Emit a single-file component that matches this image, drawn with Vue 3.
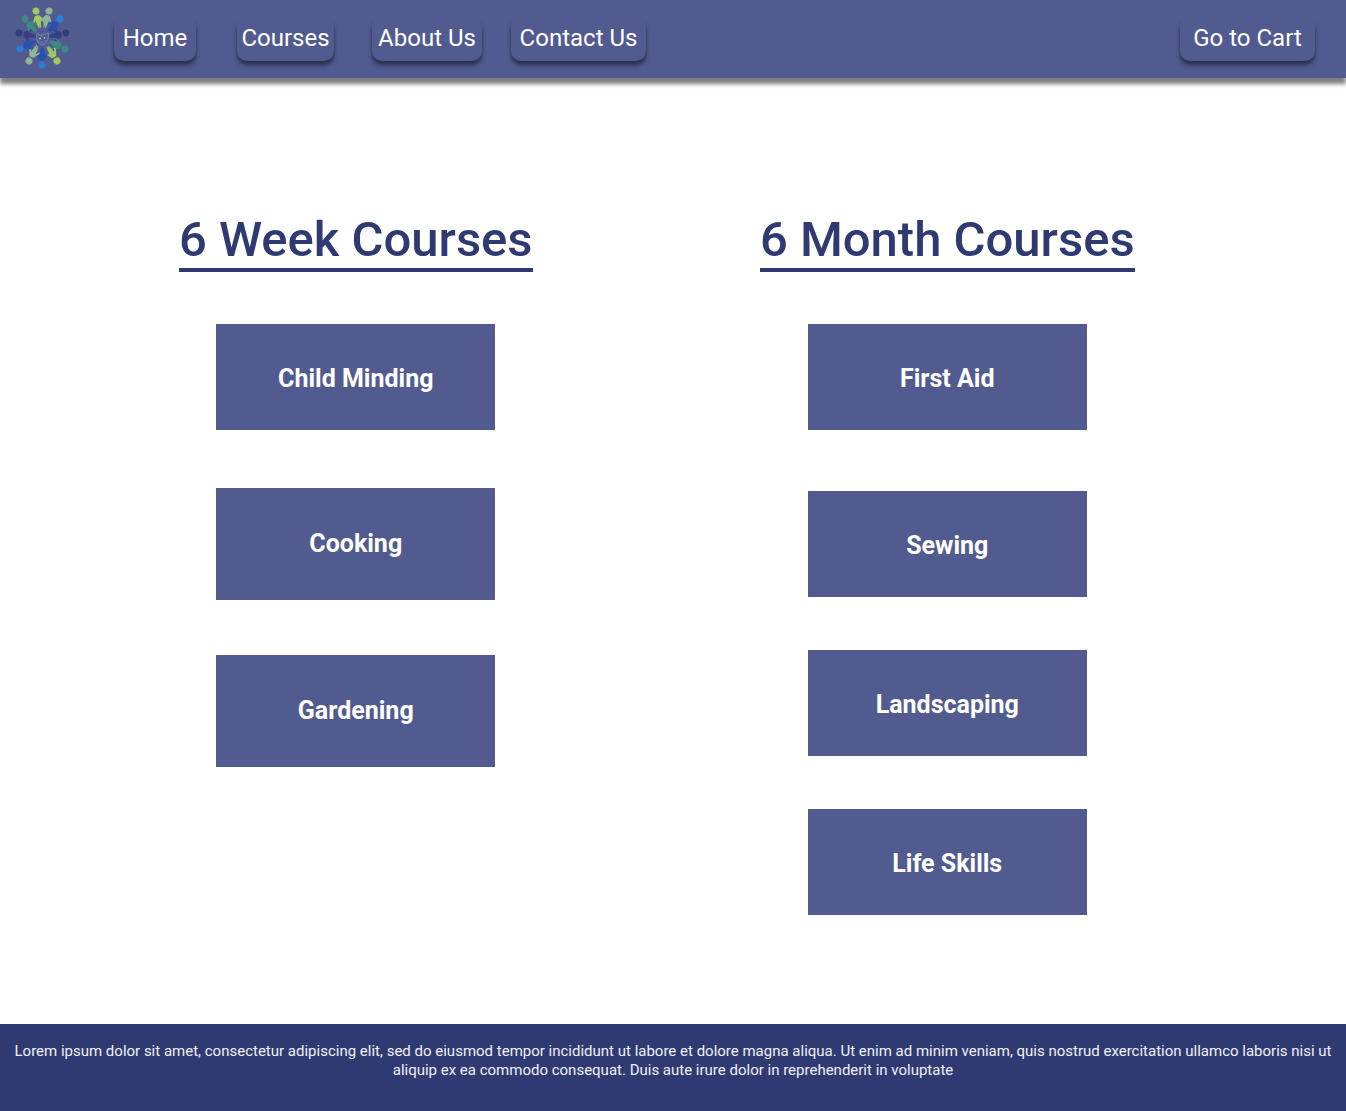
<script setup>
const links = [
  { label: 'Home', size: 'home' },
  { label: 'Courses', size: 'courses' },
  { label: 'About Us', size: 'about' },
  { label: 'Contact Us', size: 'contact' },
]

const groups = [
  { title: '6 Week Courses', kind: 'week', courses: ['Child Minding', 'Cooking', 'Gardening'] },
  { title: '6 Month Courses', kind: 'month', courses: ['First Aid', 'Sewing', 'Landscaping', 'Life Skills'] },
]

// People standing in a ring: head centre, body colour, head colour
const people = [
  { x: 36, y: 11, fill: '#a4c95c', head: '#a4c95c' },
  { x: 49, y: 11, fill: '#8fb596', head: '#8fb596' },
  { x: 60, y: 19, fill: '#2450ae', head: '#2b7fdb' },
  { x: 66, y: 33, fill: '#344080', head: '#303c7c' },
  { x: 65, y: 49, fill: '#41887f', head: '#41887f' },
  { x: 57, y: 61, fill: '#9cc56c', head: '#a4c95c' },
  { x: 42, y: 65, fill: '#2450ae', head: '#2b7fdb' },
  { x: 29, y: 61, fill: '#8fb596', head: '#8fb596' },
  { x: 20, y: 49, fill: '#2450ae', head: '#2b7fdb' },
  { x: 19, y: 33, fill: '#344080', head: '#303c7c' },
  { x: 25, y: 19, fill: '#41887f', head: '#41887f' },
].map((p) => ({
  ...p,
  turn: Math.round((Math.atan2(p.x - 42, 38 - p.y) * 180) / Math.PI),
}))
</script>

<template>
  <div class="page">
    <header class="bar">
      <a class="logo" href="#" aria-label="Home page">
        <svg viewBox="14 7 56 64" width="56" height="64" aria-hidden="true">
          <g v-for="p in people" :key="p.x + '-' + p.y" :transform="`translate(${p.x} ${p.y}) rotate(${p.turn})`">
            <path
              :fill="p.fill"
              d="M-2.500 5Q0 3.800 2.500 5L6 11.500L5 12.500L2.500 9.500L2.200 13L1.200 17.500H.4L0 14L-.4 17.500H-1.200L-2.200 13L-2.500 9.500L-5 12.500L-6 11.500Z"
            />
            <circle r="3.500" :fill="p.head" />
          </g>
          <path
            d="M37 33.500l3 1.500h2.500l6-2-.5 6-3 4.500-3 1.500-4-2.500-1.500-4z"
            fill="#4c598f"
            stroke="#7f9cc0"
            stroke-width=".7"
          />
          <path d="M38 41l3 .5 1 1.500 1.500-1.500 3-1M41 35l.5 2" fill="none" stroke="#7f9cc0" stroke-width=".5" />
          <circle cx="40" cy="38.500" r=".9" fill="#d9c3b5" />
          <circle cx="44.500" cy="37.800" r=".9" fill="#d9c3b5" />
        </svg>
      </a>
      <nav class="nav">
        <a v-for="link in links" :key="link.label" href="#" class="tab" :class="link.size">{{ link.label }}</a>
      </nav>
      <a href="#" class="tab cart">Go to Cart</a>
    </header>

    <main class="content">
      <section v-for="group in groups" :key="group.kind" class="group" :class="group.kind">
        <h1>{{ group.title }}</h1>
        <div class="list">
          <button v-for="course in group.courses" :key="course" type="button">{{ course }}</button>
        </div>
      </section>
    </main>

    <footer class="footer">
      <p>
        Lorem ipsum dolor sit amet, consectetur adipiscing elit, sed do eiusmod tempor incididunt ut labore et dolore
        magna aliqua. Ut enim ad minim veniam, quis nostrud exercitation ullamco laboris nisi ut aliquip ex ea commodo
        consequat. Duis aute irure dolor in reprehenderit in voluptate
      </p>
    </footer>
  </div>
</template>

<style>
body {
  margin: 0;
  background: #fff;
}
</style>

<style scoped>
.page {
  display: flex;
  flex-direction: column;
  min-height: 100vh;
  font-family: Roboto, Inter, sans-serif;
}

.bar {
  display: flex;
  align-items: center;
  box-sizing: border-box;
  height: 78px;
  padding: 0 31px 0 14px;
  background: #515b8f;
  box-shadow: 0 6px 4px rgba(0, 0, 0, 0.5);
}

.logo {
  display: block;
  height: 64px;
  margin-right: 44px;
}

.logo svg {
  display: block;
}

.nav {
  display: flex;
}

.tab {
  box-sizing: border-box;
  height: 44px;
  border-radius: 10px;
  box-shadow: 0 4px 4px rgba(0, 0, 0, 0.5);
  clip-path: inset(4px -8px -12px -8px);
  color: #fff;
  font-size: 24px;
  font-weight: 400;
  line-height: 42px;
  text-align: center;
  text-decoration: none;
  white-space: nowrap;
}

.home {
  width: 82px;
  margin-right: 41px;
}

.courses {
  width: 97px;
  margin-right: 38px;
}

.about {
  width: 110px;
  margin-right: 29px;
}

.contact {
  width: 135px;
}

.cart {
  width: 135px;
  margin-left: auto;
}

.content {
  display: grid;
  flex: 1;
  grid-template-columns: 1fr 1fr;
  align-items: start;
  padding: 134px 103px 109px 60px;
}

.group {
  display: flex;
  flex-direction: column;
  align-items: center;
}

h1 {
  margin: 0 0 52px;
  border-bottom: 4px solid #303a72;
  color: #303a72;
  font-size: 49px;
  font-weight: 500;
  line-height: 56px;
  white-space: nowrap;
}

.list {
  display: flex;
  flex-direction: column;
  width: 279px;
}

.week .list {
  gap: 55px;
}

.month .list {
  gap: 53px;
}

button {
  height: 106px;
  padding: 4px 0 0;
  border: 0;
  background: #515b8f;
  color: #fff;
  font: 700 25px/32px Roboto, Inter, sans-serif;
}

.week button:first-child {
  margin-bottom: 3px;
}

.month button:first-child {
  margin-bottom: 8px;
}

.week button + button {
  height: 112px;
  padding: 0;
}

.footer {
  box-sizing: border-box;
  min-height: 87px;
  padding: 18px 8px;
  background: #303a72;
}

p {
  margin: 0;
  color: #eef0f7;
  font-size: 15px;
  line-height: 19px;
  text-align: center;
}
</style>
